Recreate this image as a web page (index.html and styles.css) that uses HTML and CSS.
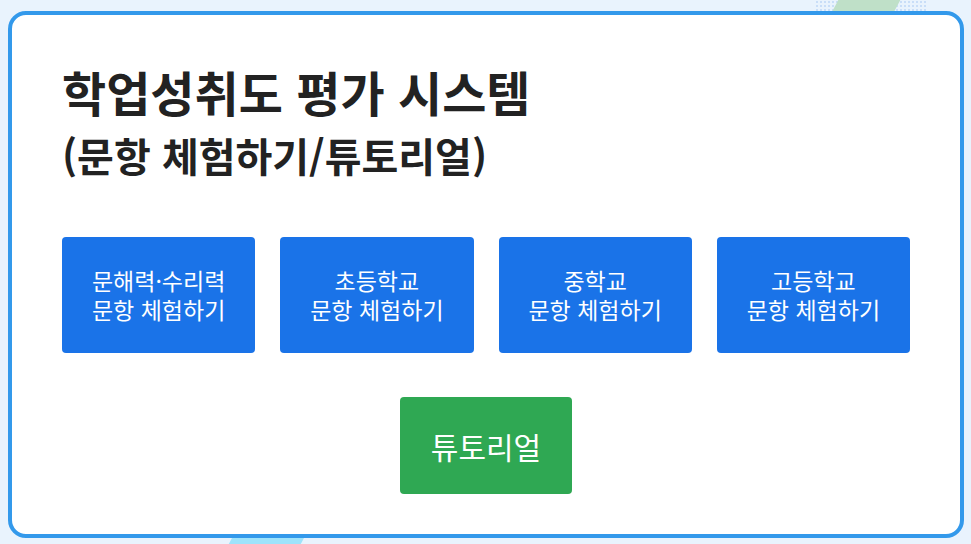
FILE: index.html
```html
<!DOCTYPE html>
<html lang="ko">
<head>
<meta charset="UTF-8">
<meta name="viewport" content="width=device-width, initial-scale=1.0">
<title>학업성취도 평가 시스템</title>
<link rel="stylesheet" href="styles.css">
</head>
<body>

<div class="deco deco-top"></div>
<div class="deco deco-bottom"></div>

<div class="container">
    <h1 class="title">학업성취도 평가 시스템<br><span class="subtitle">(문항 체험하기/튜토리얼)</span></h1>

    <div class="menu">
        <button class="menu-btn">문해력·수리력<br>문항 체험하기</button>
        <button class="menu-btn">초등학교<br>문항 체험하기</button>
        <button class="menu-btn">중학교<br>문항 체험하기</button>
        <button class="menu-btn">고등학교<br>문항 체험하기</button>
    </div>

    <div class="tutorial">
        <button class="tutorial-btn">튜토리얼</button>
    </div>
</div>

</body>
</html>
```

FILE: styles.css
```css
html, body {
    height: 100%;
}

body {
    font-family: "Noto Sans CJK KR", "Noto Sans", sans-serif;
    margin: 0;
    padding: 11px 7px 6px 8px;
    box-sizing: border-box;
    background: #e9f3fd;
    position: relative;
    overflow: hidden;
}

/* background decorations */
.deco {
    position: absolute;
    z-index: 0;
}

.deco-top {
    top: 0;
    left: 815px;
    width: 112px;
    height: 20px;
    background-image: radial-gradient(#c9def8 35%, transparent 40%);
    background-size: 4px 4px;
}

.deco-top::after {
    content: "";
    position: absolute;
    top: 0;
    left: 18px;
    width: 62px;
    height: 20px;
    background: #bfe0c8;
    transform: skewX(-28deg);
}

.deco-bottom {
    bottom: 0;
    left: 232px;
    width: 72px;
    height: 12px;
    background: #9ee3fb;
    transform: skewX(-28deg);
}

.container {
    position: relative;
    z-index: 1;
    height: 100%;
    box-sizing: border-box;
    background: #fff;
    border: 4px solid #3399eb;
    border-radius: 18px;
    padding: 46px 50px;
}

.title {
    margin: 0;
    font-size: 48px;
    font-weight: bold;
    line-height: 60px;
    color: #222;
}

.subtitle {
    font-size: 40px;
}

.menu {
    display: grid;
    grid-template-columns: repeat(4, 1fr);
    gap: 25px;
    margin-top: 52px;
}

.menu-btn {
    height: 116px;
    background: #1a73e8;
    color: #fff;
    border: none;
    border-radius: 4px;
    font-family: inherit;
    font-size: 23px;
    line-height: 29px;
    cursor: pointer;
}

.tutorial {
    display: flex;
    justify-content: center;
    margin-top: 44px;
}

.tutorial-btn {
    width: 172px;
    height: 97px;
    background: #2fa853;
    color: #fff;
    border: none;
    border-radius: 4px;
    font-family: inherit;
    font-size: 30px;
    cursor: pointer;
}
```
